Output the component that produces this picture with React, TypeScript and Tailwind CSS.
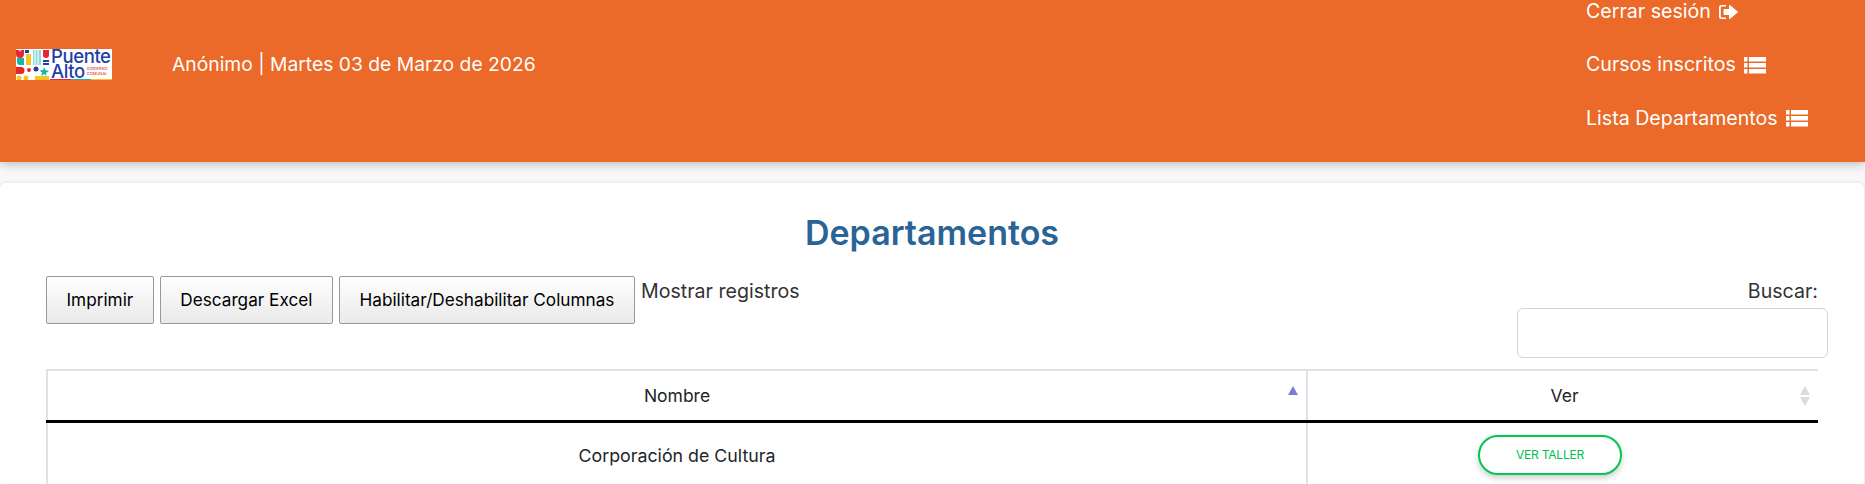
import { useState } from "react";

function ListIcon() {
  return (
    <svg width="22" height="17" viewBox="0 0 22 17" fill="currentColor" aria-hidden="true">
      <rect x="0" y="0" width="3.5" height="4.5" />
      <rect x="0" y="6" width="3.5" height="4.5" />
      <rect x="0" y="12" width="3.5" height="4.5" />
      <rect x="5" y="0" width="17" height="4.5" />
      <rect x="5" y="6" width="17" height="4.5" />
      <rect x="5" y="12" width="17" height="4.5" />
    </svg>
  );
}

function LogoutIcon() {
  return (
    <svg width="19" height="16" viewBox="0 0 19 16" fill="currentColor" aria-hidden="true">
      <path d="M2.5 1H7v1.6H3a1.2 1.2 0 0 0-1.2 1.2v8.4A1.2 1.2 0 0 0 3 13.4h4V15H2.5A2.5 2.5 0 0 1 0 12.5v-9A2.5 2.5 0 0 1 2.5 1Z" />
      <path d="M11.2 1.2 18.6 7.4a.8.8 0 0 1 0 1.2l-7.4 6.2a.7.7 0 0 1-1.2-.5V11H5.5a1 1 0 0 1-1-1V6a1 1 0 0 1 1-1H10V1.7a.7.7 0 0 1 1.2-.5Z" />
    </svg>
  );
}

function Logo() {
  return (
    <div className="flex h-[31px] w-[96px] items-stretch bg-white">
      <svg width="34" height="31" viewBox="0 0 34 31" className="shrink-0" aria-hidden="true">
        <path d="M0 1h3l1 2 1-2h3v4a4 4 0 0 1-8 0Z" fill="#e8242c" />
        <rect x="9" y="1" width="4" height="3" fill="#1f3fa6" />
        <path d="M1 9h7v7H4a3 3 0 0 1-3-3Z" fill="#19b5a5" />
        <rect x="10" y="5" width="5" height="11" fill="#f7c325" />
        <path d="M17 1h8v15h-8Z" fill="#8fdcd8" />
        <path d="M19 1v15M22 1v15" stroke="#ffffff" strokeWidth="1" />
        <path d="M27 1h6v5a3 3 0 0 1-6 0Z" fill="#e8242c" />
        <rect x="27" y="11" width="6" height="2" fill="#1f3fa6" />
        <rect x="27" y="14" width="6" height="2" fill="#1f3fa6" />
        <path d="M0 18h5a3.5 3.5 0 0 1 0 7H0Z" fill="#e8242c" />
        <circle cx="13" cy="21" r="2" fill="#e8242c" />
        <circle cx="20" cy="20" r="2.5" fill="#1f3fa6" />
        <path d="M28 18l1.5 3 3.5 1-3 2 .5 3-2.500-2-3 2 1-3.500-2.500-2 3.500-.5Z" fill="#19b5a5" />
        <circle cx="3" cy="29" r="2.500" fill="#f7c325" />
        <circle cx="10" cy="29" r="2.500" fill="#f7c325" />
        <rect x="19" y="27" width="14" height="4" fill="#f7c325" />
      </svg>
      <div className="relative min-w-0 flex-1 pl-[1px] text-[18.5px] leading-[15px] font-medium text-[#1f3fa6]">
        <div className="tracking-[-0.4px]">Puente</div>
        <div className="flex items-center tracking-[-0.4px]">
          Alto
          <span className="ml-[2px] text-[4px] leading-[5px] tracking-normal text-[#e8503c]">
            GOBIERNO
            <br />
            COMUNAL
          </span>
        </div>
        <div className="absolute right-0 bottom-0 left-0 flex h-[1px]">
          <span className="flex-1 bg-[#e8242c]" />
          <span className="flex-1 bg-[#19b5a5]" />
          <span className="flex-1 bg-[#f7c325]" />
        </div>
      </div>
    </div>
  );
}

function NavLink({ label, icon }: { label: string; icon: React.ReactNode }) {
  return (
    <a href="#" className="flex h-[53.5px] items-center gap-[8px] text-white">
      <span>{label}</span>
      {icon}
    </a>
  );
}

function DtButton({ label }: { label: string }) {
  return (
    <button className="h-[48px] rounded-[2px] border border-[#999] bg-linear-to-b from-white to-[#e9e9e9] px-[19.500px] text-[17.2px] text-black">
      {label}
    </button>
  );
}

export default function App() {
  const [search, setSearch] = useState("");

  return (
    <div className="flex h-[484px] flex-col overflow-hidden bg-[#f8f8f8] font-['Inter',sans-serif] text-[19.6px]">
      <header className="relative z-10 flex h-[162px] shrink-0 items-center bg-[#eb6929] pb-[34px] shadow-[0_2px_10px_rgba(0,0,0,0.25)]">
        <div className="ml-[16px] w-[156px]">
          <Logo />
        </div>
        <div className="text-[19.3px] text-white">Anónimo | Martes 03 de Marzo de 2026</div>
        <nav className="mt-[2px] mr-[57px] ml-auto flex w-[222px] flex-col">
          <NavLink label="Cerrar sesión" icon={<LogoutIcon />} />
          <NavLink label="Cursos inscritos" icon={<ListIcon />} />
          <NavLink label="Lista Departamentos" icon={<ListIcon />} />
        </nav>
      </header>

      <main className="mt-[21px] mr-[1px] flex-1 rounded-[6px] bg-white px-[46px] shadow-[0_0_4px_rgba(0,0,0,0.12)]">
        <h1 className="mt-[29px] text-center text-[34px] leading-[42px] font-semibold text-[#2a6496]">
          Departamentos
        </h1>

        <div className="mt-[22px] flex items-start justify-between">
          <div className="flex items-start gap-[6px]">
            <DtButton label="Imprimir" />
            <DtButton label="Descargar Excel" />
            <DtButton label="Habilitar/Deshabilitar Columnas" />
            <span className="pt-[1px] text-[#333]">Mostrar registros</span>
          </div>
          <div className="flex flex-col items-end">
            <label htmlFor="buscar" className="pt-[1px] text-[#333]">
              Buscar:
            </label>
            <input
              id="buscar"
              value={search}
              onChange={(e) => setSearch(e.target.value)}
              className="mt-[2px] -mr-[10px] h-[50px] w-[311px] rounded-[6px] border border-[#ced4da] bg-white"
            />
          </div>
        </div>

        <table className="mt-[11px] w-full table-fixed border-collapse text-[17.500px] text-[#212529]">
          <colgroup>
            <col className="w-[1260px]" />
            <col />
          </colgroup>
          <thead>
            <tr className="border-t-2 border-b-[3px] border-t-[#dee2e6] border-b-black">
              <th className="relative h-[51px] border-l-2 border-[#dee2e6] font-normal">
                Nombre
                <span className="absolute top-[15px] right-[8px] h-0 w-0 border-x-[5px] border-b-[9px] border-x-transparent border-b-[#7b7bdb]" />
              </th>
              <th className="relative border-l-2 border-[#dee2e6] pl-[3px] font-normal">
                Ver
                <span className="absolute top-[15px] right-[8px] h-0 w-0 border-x-[5px] border-b-[9px] border-x-transparent border-b-[#dcdcdc]" />
                <span className="absolute top-[26px] right-[8px] h-0 w-0 border-x-[5px] border-t-[9px] border-x-transparent border-t-[#dcdcdc]" />
              </th>
            </tr>
          </thead>
          <tbody>
            <tr>
              <td className="h-[66px] border-l-2 border-[#dee2e6] pt-[2px] text-center text-[17.800px]">
                Corporación de Cultura
              </td>
              <td className="border-l-2 border-[#dee2e6] pr-[26px] text-center">
                <button className="h-[40px] w-[144px] rounded-full border-2 border-[#00c853] bg-white text-[12px] tracking-[-0.2px] text-[#00c04d] shadow-[0_3px_6px_rgba(0,0,0,0.2)]">
                  VER TALLER
                </button>
              </td>
            </tr>
          </tbody>
        </table>
      </main>
    </div>
  );
}
